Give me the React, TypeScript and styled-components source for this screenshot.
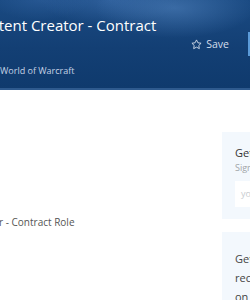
import React from "react";
import styled, { createGlobalStyle } from "styled-components";

const Global = createGlobalStyle`
  html, body { margin: 0; padding: 0; background: #fff; overflow: hidden; }
  body { font-family: "Open Sans", "Liberation Sans", sans-serif; width: 250px; height: 300px; }
`;

const Page = styled.div`
  width: 250px;
  height: 300px;
  overflow: hidden;
`;

const Hero = styled.header`
  height: 88px;
  border-bottom: 2px solid #2e5a8e;
  background:
    radial-gradient(ellipse 80px 30px at 175px 8px, rgba(90, 140, 200, 0.5), rgba(90, 140, 200, 0) 100%),
    radial-gradient(ellipse 70px 25px at 110px 0px, rgba(70, 120, 185, 0.45), rgba(70, 120, 185, 0) 100%),
    radial-gradient(ellipse 50px 20px at 40px 0px, rgba(60, 110, 175, 0.35), rgba(60, 110, 175, 0) 100%),
    linear-gradient(180deg, #1a4a82 0%, #133f74 55%, #0f3a6d 100%);
  display: flex;
  align-items: stretch;
`;

const HeroMain = styled.div`
  flex: 1;
  margin-left: -29px;
  padding-top: 15px;
  display: flex;
  flex-direction: column;
`;

const Title = styled.h1`
  margin: 0;
  font-size: 15px;
  font-weight: 400;
  color: #ffffff;
  line-height: 20px;
  white-space: nowrap;
`;

const TitleRow = styled.div`
  display: flex;
  align-items: center;
  justify-content: flex-end;
  margin-top: 2px;
`;

const SaveButton = styled.button`
  display: flex;
  align-items: center;
  gap: 4px;
  background: none;
  border: none;
  padding: 0;
  margin-right: 19px;
  color: #d4deec;
  font-family: inherit;
  font-size: 10.5px;
  line-height: 14px;
`;

const ApplyEdge = styled.div`
  width: 2px;
  margin-top: 32px;
  height: 24px;
  background: #5b9bd9;
`;

const Studio = styled.div`
  margin-left: 29px;
  margin-top: 13px;
  font-size: 9px;
  color: #c5d2e4;
  white-space: nowrap;
`;

const Body = styled.div`
  display: flex;
  padding-top: 42px;
`;

const Main = styled.div`
  flex: 1;
  padding-top: 83px;
  margin-left: -72px;
  overflow: hidden;
`;

const Role = styled.p`
  margin: 0;
  font-size: 10px;
  color: #555;
  white-space: nowrap;
`;

const Sidebar = styled.aside`
  width: 28px;
  display: flex;
  flex-direction: column;
  gap: 13px;
`;

const Panel = styled.section`
  background: #f3f8fd;
  padding: 13px 0 12px 13px;
  overflow: hidden;
  white-space: nowrap;
`;

const PanelTitle = styled.div`
  font-size: 11px;
  color: #333;
  line-height: 16px;
`;

const PanelSub = styled.div`
  font-size: 9px;
  color: #a0a4a8;
  line-height: 13px;
`;

const Input = styled.div`
  margin-top: 7px;
  height: 26px;
  background: #fff;
  padding-left: 6px;
  font-size: 9px;
  line-height: 26px;
  color: #c8ccd0;
`;

const PanelText = styled.p`
  margin: 0;
  padding-top: 4px;
  font-size: 11px;
  line-height: 19px;
  color: #444;
  white-space: normal;
  width: 30px;
`;

const Star = () => (
  <svg width="11" height="11" viewBox="0 0 24 24" fill="none" stroke="currentColor" strokeWidth="2" strokeLinejoin="round">
    <polygon points="12 2 15.09 8.26 22 9.27 17 14.14 18.18 21.02 12 17.77 5.82 21.02 7 14.14 2 9.27 8.91 8.26 12 2" />
  </svg>
);

export default function App() {
  return (
    <Page>
      <Global />
      <Hero>
        <HeroMain>
          <Title>Content Creator - Contract</Title>
          <TitleRow>
            <SaveButton>
              <Star />
              Save
            </SaveButton>
          </TitleRow>
          <Studio>World of Warcraft</Studio>
        </HeroMain>
        <ApplyEdge />
      </Hero>
      <Body>
        <Main>
          <Role>Content Creator - Contract Role</Role>
        </Main>
        <Sidebar>
          <Panel>
            <PanelTitle>Get notified</PanelTitle>
            <PanelSub>Sign up</PanelSub>
            <Input>your email</Input>
          </Panel>
          <Panel>
            <PanelText>Get recommendations on</PanelText>
          </Panel>
        </Sidebar>
      </Body>
    </Page>
  );
}
